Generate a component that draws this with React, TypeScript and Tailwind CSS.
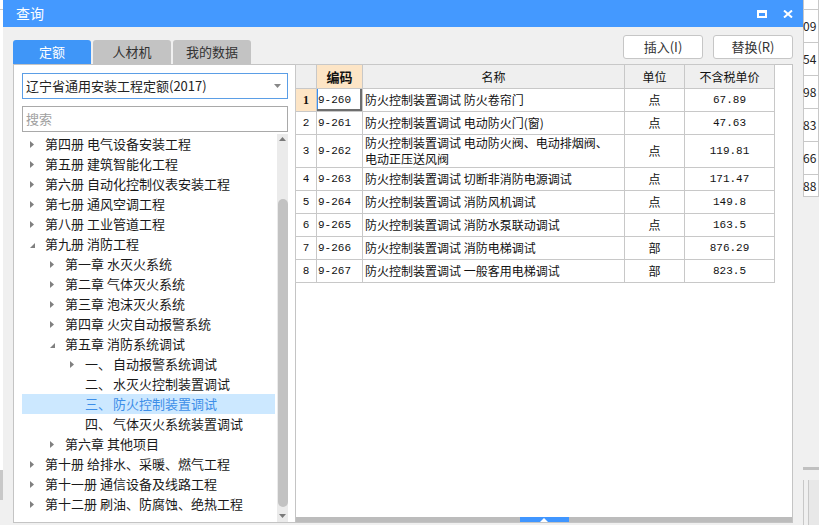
import React from 'react';

type Node = { lv: number; t: string; n?: string; a?: 'r' | 'd'; sel?: boolean };

const tree: Node[] = [
  { lv: 1, t: '第四册 电气设备安装工程', a: 'r' },
  { lv: 1, t: '第五册 建筑智能化工程', a: 'r' },
  { lv: 1, t: '第六册 自动化控制仪表安装工程', a: 'r' },
  { lv: 1, t: '第七册 通风空调工程', a: 'r' },
  { lv: 1, t: '第八册 工业管道工程', a: 'r' },
  { lv: 1, t: '第九册 消防工程', a: 'd' },
  { lv: 2, t: '第一章 水灭火系统', a: 'r' },
  { lv: 2, t: '第二章 气体灭火系统', a: 'r' },
  { lv: 2, t: '第三章 泡沫灭火系统', a: 'r' },
  { lv: 2, t: '第四章 火灾自动报警系统', a: 'r' },
  { lv: 2, t: '第五章 消防系统调试', a: 'd' },
  { lv: 3, n: '一、', t: '自动报警系统调试', a: 'r' },
  { lv: 3, n: '二、', t: '水灭火控制装置调试' },
  { lv: 3, n: '三、', t: '防火控制装置调试', sel: true },
  { lv: 3, n: '四、', t: '气体灭火系统装置调试' },
  { lv: 2, t: '第六章 其他项目', a: 'r' },
  { lv: 1, t: '第十册 给排水、采暖、燃气工程', a: 'r' },
  { lv: 1, t: '第十一册 通信设备及线路工程', a: 'r' },
  { lv: 1, t: '第十二册 刷油、防腐蚀、绝热工程', a: 'r' },
];

const rows = [
  ['1', '9-260', '防火控制装置调试 防火卷帘门', '点', '67.89'],
  ['2', '9-261', '防火控制装置调试 电动防火门(窗)', '点', '47.63'],
  ['3', '9-262', '', '点', '119.81'],
  ['4', '9-263', '防火控制装置调试 切断非消防电源调试', '点', '171.47'],
  ['5', '9-264', '防火控制装置调试 消防风机调试', '点', '149.8'],
  ['6', '9-265', '防火控制装置调试 消防水泵联动调试', '点', '163.5'],
  ['7', '9-266', '防火控制装置调试 消防电梯调试', '部', '876.29'],
  ['8', '9-267', '防火控制装置调试 一般客用电梯调试', '部', '823.5'],
];

const mono = 'font-["Liberation_Mono","DejaVu_Sans_Mono",monospace] text-[11px]';

function Arrow({ a }: { a?: 'r' | 'd' }) {
  if (a === 'r')
    return (
      <svg width="6" height="9" viewBox="0 0 6 9" className="ml-[3px]">
        <path d="M1 1 L5 4.5 L1 8 Z" fill="#808080" />
      </svg>
    );
  if (a === 'd')
    return (
      <svg width="7" height="7" viewBox="0 0 7 7" className="ml-[3px] mt-[3px]">
        <path d="M6 1 L6 6 L1 6 Z" fill="#808080" />
      </svg>
    );
  return null;
}

function LeftPanel() {
  return (
    <div className="w-[282px] h-full bg-white border-l border-t border-b border-[#c4c4c4] flex flex-col pl-[8px] pt-[8px]">
      <div className="w-[266px] h-[26px] border border-[#5b9ee6] flex items-center justify-between pl-[3px] pr-[6px] text-[13px] text-[#222]">
        <span>辽宁省通用安装工程定额(2017)</span>
        <svg width="7" height="4" viewBox="0 0 7 4">
          <path d="M0 0 L7 0 L3.5 4 Z" fill="#888" />
        </svg>
      </div>
      <div className="w-[266px] h-[26px] mt-[7px] border border-[#a9a9a9] flex items-center pl-[3px] text-[13px] text-[#a0a0a0]">
        搜索
      </div>
      <div className="flex-1 mt-[2px] flex gap-[2px] overflow-hidden">
        <div className="w-[253px]">
          {tree.map((n, i) => (
            <div
              key={i}
              className={`h-[20px] flex items-center text-[13px] whitespace-nowrap ${n.sel ? 'bg-[#cce8ff] text-[#3d8ee8]' : 'text-[#1a1a1a]'}`}
            >
              <div style={{ width: (n.lv - 1) * 20 + 4 }} className="shrink-0" />
              <div className="w-[19px] shrink-0 flex items-center">
                <Arrow a={n.a} />
              </div>
              {n.n && <span className="w-[28px] shrink-0">{n.n}</span>}
              <span>{n.t}</span>
            </div>
          ))}
        </div>
        <div className="w-[11px] bg-[#ebebeb] flex flex-col items-center">
          <svg width="9" height="12" viewBox="0 0 9 12" className="shrink-0">
            <path d="M1 7 L4.5 3 L8 7 Z" fill="#7a7a7a" />
          </svg>
          <div className="h-[53px] shrink-0" />
          <div className="w-[10px] h-[308px] rounded-full bg-[#c2c2c2] shrink-0" />
          <div className="flex-1" />
          <svg width="9" height="12" viewBox="0 0 9 12" className="shrink-0">
            <path d="M1 4 L8 4 L4.5 8 Z" fill="#7a7a7a" />
          </svg>
        </div>
      </div>
    </div>
  );
}

function TablePanel() {
  const cell = 'border border-[#c8c8c8]';
  return (
    <div className="w-[498px] h-full bg-white border border-[#c4c4c4] flex flex-col">
      <table className="border-collapse table-fixed w-[479px] -mt-px -ml-px text-[12px] text-[#111]">
        <colgroup>
          <col className="w-[21px]" />
          <col className="w-[46px]" />
          <col className="w-[262px]" />
          <col className="w-[60px]" />
          <col className="w-[90px]" />
        </colgroup>
        <thead>
          <tr className="h-[24px] bg-[#efefef]">
            <th className={cell}></th>
            <th className={`${cell} bg-[#fde5c6] font-bold text-[13px]`}>编码</th>
            <th className={`${cell} font-normal`}>名称</th>
            <th className={`${cell} font-normal`}>单位</th>
            <th className={`${cell} font-normal`}>不含税单价</th>
          </tr>
        </thead>
        <tbody>
          {rows.map((r, i) => (
            <tr key={i} className={i === 2 ? 'h-[33px]' : 'h-[23px]'}>
              <td className={`${cell} text-center ${i === 0 ? 'bg-[#fde5c6] font-bold font-["Liberation_Serif",serif] text-[12px]' : mono}`}>
                {r[0]}
              </td>
              <td
                className={`${cell} ${mono} pl-[1px] ${i === 0 ? 'shadow-[inset_-2px_-2px_0_#6e6e6e,inset_1px_0_0_#3b8ff0]' : ''}`}
              >
                {r[1]}
              </td>
              <td className={`${cell} pl-[2px] whitespace-nowrap overflow-hidden`}>
                {i === 2 ? (
                  <div className="leading-[16px]">
                    <div>防火控制装置调试 电动防火阀、电动排烟阀、</div>
                    <div>电动正压送风阀</div>
                  </div>
                ) : (
                  r[2]
                )}
              </td>
              <td className={`${cell} text-center`}>{r[3]}</td>
              <td className={`${cell} text-center ${mono}`}>{r[4]}</td>
            </tr>
          ))}
        </tbody>
      </table>
      <div className="flex-1" />
      <div className="h-[5px] bg-[#bcbcbc] flex justify-center">
        <div className="w-[49px] h-full bg-[#4096ff] flex items-center justify-center">
          <svg width="8" height="4" viewBox="0 0 8 4">
            <path d="M0 4 L4 0 L8 4 Z" fill="#fff" />
          </svg>
        </div>
      </div>
    </div>
  );
}

export default function App() {
  const bgNums = ['09', '54', '98', '83', '66'];
  return (
    <div className='w-[819px] h-[525px] flex overflow-hidden bg-white font-["Noto_Sans_CJK_SC","Noto_Sans",sans-serif]'>
      <div className="w-[3px] h-full flex flex-col bg-[#f0f0f0]">
        <div className="h-[10px] bg-white border-b border-[#c8c8c8]" />
        <div className="h-[460px] bg-white" />
        <div className="h-[30px] bg-[#c8c8c8]" />
      </div>

      <div className="w-[800px] h-full flex flex-col">
        <div className="h-[27px] bg-[#4499ff] flex items-center justify-between pl-[13px] pr-[10px]">
          <span className="text-white text-[14px]">查询</span>
          <div className="flex items-center gap-[16px]">
            <div className="w-[10px] h-[8px] border-2 border-white border-t-[3px]" />
            <svg width="10" height="8" viewBox="0 0 10 8">
              <path d="M1 0.5 L9 7.5 M9 0.5 L1 7.5" stroke="#fff" strokeWidth="2" />
            </svg>
          </div>
        </div>
        <div className="flex-1 bg-[#f0f0f0] flex flex-col px-[10px]">
          <div className="h-[37px] flex justify-between">
            <div className="flex items-end gap-[2px] text-[13px]">
              <div className="w-[78px] h-[24px] rounded-t-[3px] bg-[#3f96f8] text-white flex items-center justify-center">定额</div>
              <div className="w-[78px] h-[24px] rounded-t-[3px] bg-[#c3c3c3] text-[#333] flex items-center justify-center">人材机</div>
              <div className="w-[78px] h-[24px] rounded-t-[3px] bg-[#c3c3c3] text-[#333] flex items-center justify-center">我的数据</div>
            </div>
            <div className="flex gap-[10px] mt-[8px] text-[13px] text-[#333]">
              <div className="w-[80px] h-[24px] bg-white border border-[#c6c6c6] rounded-[3px] flex items-center justify-center">插入(I)</div>
              <div className="w-[80px] h-[24px] bg-white border border-[#c6c6c6] rounded-[3px] flex items-center justify-center">替换(R)</div>
            </div>
          </div>
          <div className="h-[459px] flex">
            <LeftPanel />
            <TablePanel />
          </div>
        </div>
      </div>

      <div className="w-[16px] h-full flex flex-col bg-[#f0f0f0] overflow-hidden">
        <div className="bg-white border-l border-r border-[#c8c8c8] w-[16px]">
          <div className="h-[10px] border-b border-[#c8c8c8]" />
          {bgNums.map((n) => (
            <div key={n} className="h-[33px] border-b border-[#c8c8c8] flex items-center text-[12px] text-[#222] -ml-[1px]">
              {n}
            </div>
          ))}
          <div className="h-[22px] border-b border-[#c8c8c8] flex items-center text-[12px] text-[#222] -ml-[1px]">88</div>
        </div>
        <div className="h-[270px] shrink-0" />
        <div className="h-[3px] bg-[#c0c0c0] shrink-0" />
        <div className="h-[10px] shrink-0" />
        <div className="flex-1 border-l border-[#c8c8c8] flex">
          <div className="w-[5px] border-r border-[#c8c8c8]" />
          <div className="flex-1 bg-[#e8e8e8]" />
        </div>
      </div>
    </div>
  );
}
